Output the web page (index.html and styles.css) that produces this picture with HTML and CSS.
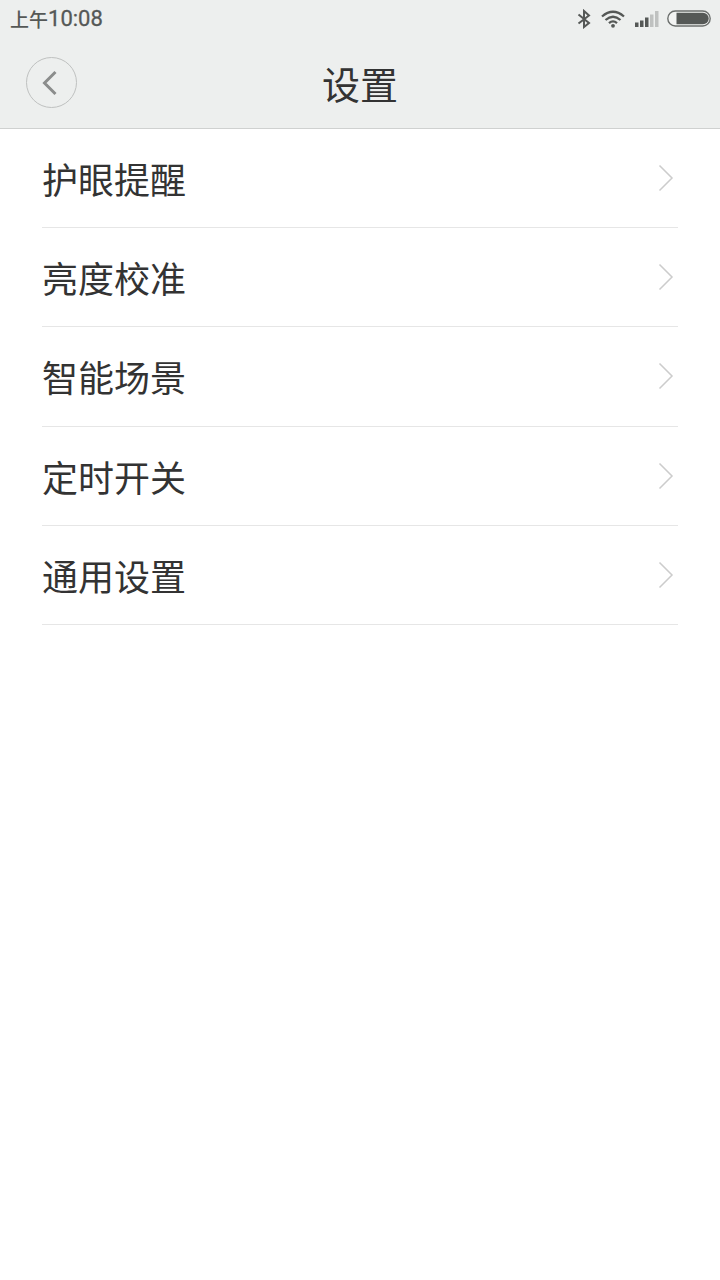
FILE: index.html
```html
<!DOCTYPE html>
<html lang="zh-CN">
<head>
<meta charset="utf-8">
<meta name="viewport" content="width=device-width, initial-scale=1">
<title>设置</title>
<link rel="stylesheet" href="styles.css">
</head>
<body>
<header class="top">
  <div class="status">
    <div class="time"><span class="period">上午</span><span class="clock">10:08</span></div>
    <div class="indicators">
      <svg class="bluetooth" width="14" height="20" viewBox="0 0 14 20" fill="none" stroke="#555856" stroke-width="2"><path d="M1.500 5.500 12 14 7 18V2l5 4.500L1.500 14.500"/></svg>
      <svg class="wifi" width="24" height="18" viewBox="0 0 24 18" fill="none" stroke="#555856" stroke-width="2.300"><path d="M1 6.500Q12-3 23 6.500M4.500 10Q12 3.500 19.500 10M8 13.200Q12 9.600 16 13.200"/><circle cx="12" cy="15.800" r="1.900" fill="#555856" stroke="none"/></svg>
      <svg class="signal" width="24" height="18" viewBox="0 0 24 18"><path fill="#555856" d="M0 12.500h3.500V17H0zM5 10.500h3.500V17H5zM10 7.500h3.500V17H10z"/><path fill="#bfc1c0" d="M15 4.500h3.500V17H15zM20 1h3.500v16H20z"/></svg>
      <svg class="battery" width="44" height="17" viewBox="0 0 44 17"><rect x=".8" y="1" width="42.400" height="15" rx="7.500" fill="#f3f4f3" stroke="#6c6f6d" stroke-width="1.400"/><path fill="#555856" d="M9.500 2.800H36a5.700 5.700 0 0 1 0 11.400H9.500z"/></svg>
    </div>
  </div>
  <div class="bar">
    <button class="back" type="button" aria-label="返回"><svg width="49" height="49" viewBox="0 0 49 49" fill="none" stroke="#8b8d8c" stroke-width="3"><path d="M28.500 14 17.500 25l11 11"/></svg></button>
    <h1 class="title">设置</h1>
  </div>
</header>
<main>
  <nav class="menu">
    <a class="item" href="#eye">护眼提醒<svg class="arrow" viewBox="0 0 16 28"><path d="m1.500 1.500 12.500 12.500L1.500 26.500"/></svg></a>
    <a class="item" href="#brightness">亮度校准<svg class="arrow" viewBox="0 0 16 28"><path d="m1.500 1.500 12.500 12.500L1.500 26.500"/></svg></a>
    <a class="item" href="#scene">智能场景<svg class="arrow" viewBox="0 0 16 28"><path d="m1.500 1.500 12.500 12.500L1.500 26.500"/></svg></a>
    <a class="item" href="#timer">定时开关<svg class="arrow" viewBox="0 0 16 28"><path d="m1.500 1.500 12.500 12.500L1.500 26.500"/></svg></a>
    <a class="item" href="#general">通用设置<svg class="arrow" viewBox="0 0 16 28"><path d="m1.500 1.500 12.500 12.500L1.500 26.500"/></svg></a>
  </nav>
</main>
</body>
</html>
```
FILE: styles.css
```css
* { box-sizing: border-box; }

body {
  margin: 0;
  background: #fff;
  color: #333;
  font-family: "Noto Sans CJK SC", sans-serif;
}

.top {
  background: #edefee;
  border-bottom: 1px solid #cfd1d0;
}

.status {
  display: flex;
  align-items: center;
  justify-content: space-between;
  height: 37px;
  padding: 0 9px 0 10px;
  color: #555856;
}

.time {
  display: flex;
  align-items: center;
  font-weight: 500;
  line-height: 36px;
}

.period { font-size: 19px; }

.clock {
  font-family: Roboto, sans-serif;
  font-size: 22px;
  font-weight: 400;
  -webkit-text-stroke: 0.3px;
}

.indicators {
  display: flex;
  align-items: center;
}

.wifi { margin-left: 10px; }
.signal { margin-left: 10px; }
.battery { margin-left: 8px; }

.bar {
  display: grid;
  grid-template-columns: 1fr auto 1fr;
  align-items: center;
  height: 91px;
  padding: 0 26px;
}

.back {
  display: flex;
  width: 51px;
  height: 51px;
  padding: 0;
  border: 1px solid #bfc1c0;
  border-radius: 50%;
  background: none;
}

.title {
  margin: 0;
  font-size: 38px;
  font-weight: 400;
  line-height: 52px;
}

.menu {
  display: grid;
  grid-auto-rows: 1fr;
  min-height: 496px;
  padding: 0 42px;
}

.item {
  display: flex;
  align-items: center;
  justify-content: space-between;
  padding-right: 4px;
  border-bottom: 1px solid #e6e6e6;
  color: inherit;
  font-size: 36px;
  text-decoration: none;
}

.arrow {
  width: 16px;
  height: 28px;
  fill: none;
  stroke: #ccc;
  stroke-width: 1.5;
}
```
